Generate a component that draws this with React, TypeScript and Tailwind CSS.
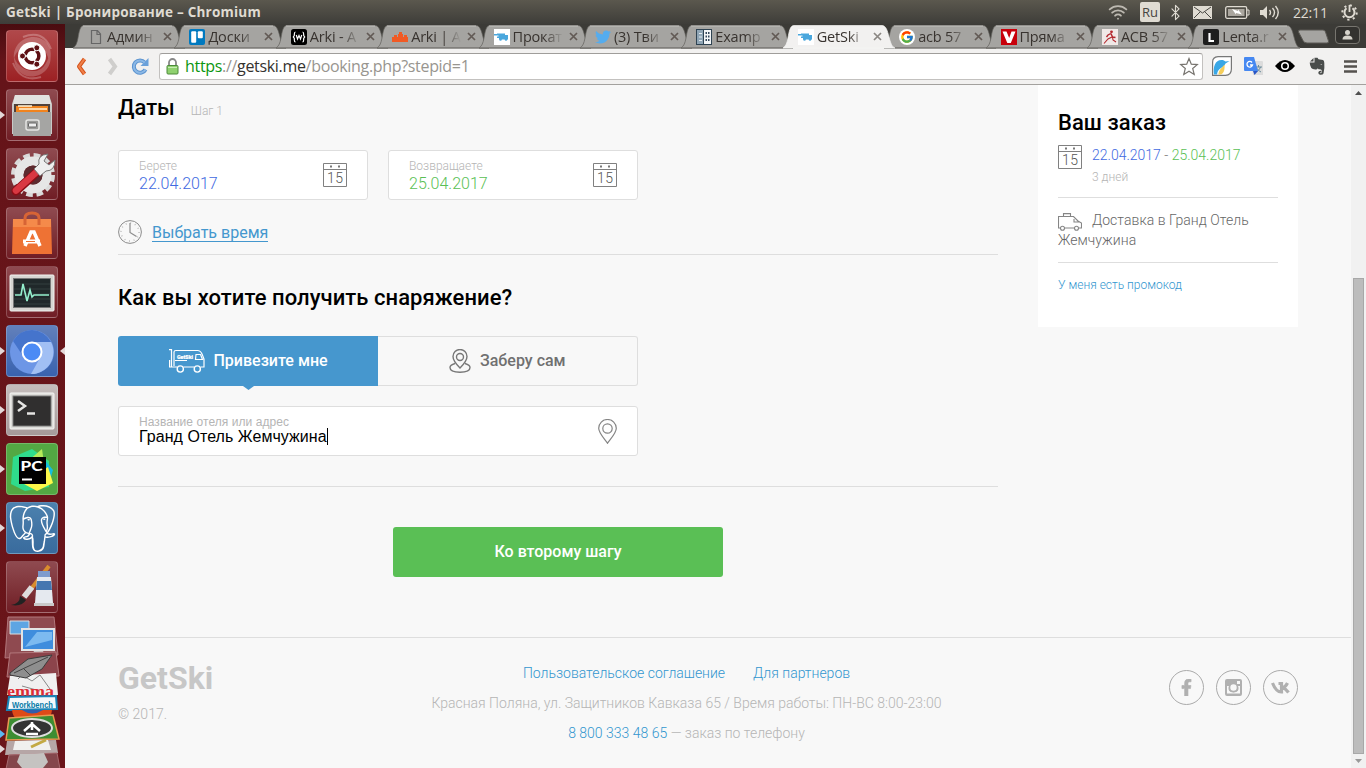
import React from "react";
import { FaFacebookF, FaTwitter, FaVk, FaEvernote, FaTrello, FaUbuntu } from "react-icons/fa";
import { FcGoogle } from "react-icons/fc";
import { SiPostgresql } from "react-icons/si";
import { Wifi, Bluetooth } from "lucide-react";

const ui = "font-['Open_Sans','Noto_Sans',sans-serif]";

function MiniVan() {
  return (
    <span className="flex h-4 w-4 items-center justify-center bg-white">
      <svg width="16" height="16" viewBox="0 0 16 16">
        <path d="M0 5h3V4.500h8V6h3v4.500H5V9H3V7.500h1.500V6.500H0z" fill="#4aa7dd" />
        <circle cx="6.500" cy="10.500" r="1.300" fill="#4aa7dd" />
        <circle cx="12" cy="10.500" r="1.300" fill="#4aa7dd" />
      </svg>
    </span>
  );
}

const favicons: React.ReactNode[] = [
  <svg width="16" height="16" viewBox="0 0 16 16" fill="none" stroke="#666" strokeWidth="1.200">
    <path d="M3.500 1.500h6l3 3.500v9.500h-9zM9 1.500V5.500h3.500" />
  </svg>,
  <svg width="16" height="16" viewBox="0 0 16 16">
    <rect width="16" height="16" rx="2" fill="#0079bf" />
    <rect x="2.200" y="2.200" width="5" height="11.500" rx="1" fill="#fff" />
    <rect x="8.800" y="2.200" width="5" height="7" rx="1" fill="#fff" />
  </svg>,
  <svg width="16" height="16" viewBox="0 0 16 16">
    <rect width="16" height="16" rx="2.500" fill="#000" />
    <path d="M4.500 3C3 3 3.500 4.500 3.300 6.500L2.300 8l1 1.300C3.500 12 3 13 4.500 13M11.500 3c1.500 0 1 1.500 1.200 3.500l1 1.500-1 1.300c-.2 2.700.3 3.700-1.200 3.700M5.300 6l1.200 4L8 6.500 9.500 10l1.200-4" fill="none" stroke="#fff" strokeWidth="1.200" />
  </svg>,
  <svg width="16" height="16" viewBox="0 0 16 16" fill="#f15a24">
    <path d="M0 8h2V6h3v2h1V5h1V3h3v2h1v3h1V6h3v2h1v5H0z" />
  </svg>,
  <MiniVan />,
  <FaTwitter size={16} color="#55acee" />,
  <svg width="16" height="16" viewBox="0 0 16 16">
    <rect x=".5" y=".5" width="15" height="15" fill="#8fa5b5" stroke="#2f4352" />
    <path d="M8 1h7v14H8z" fill="#f3f6f8" />
    <path d="M7.500 1v14" stroke="#2f4352" />
    <path d="M3 4.500h3M3 8h3M3 11.500h3" stroke="#e4ebf0" />
    <path d="M9.500 4h4M9.500 7.500h4M9.500 11h4" stroke="#33475b" strokeWidth="2" strokeDasharray="1.500 1" />
  </svg>,
  <MiniVan />,
  <span className="flex h-4 w-4 items-center justify-center rounded-full bg-white">
    <FcGoogle size={14} />
  </span>,
  <svg width="16" height="16" viewBox="0 0 16 16">
    <rect width="16" height="16" fill="#c8000b" />
    <path d="M1.500 2.500h4l2.700 6.500 2.300-6.500h4L9.800 14H6.300z" fill="#fff" />
  </svg>,
  <svg width="16" height="16" viewBox="0 0 16 16">
    <rect width="16" height="16" fill="#f0e8e6" />
    <circle cx="9.500" cy="2.800" r="1.400" fill="#b3272d" />
    <path d="M8.800 4.500 6 6 4.500 8M9 4.500l1.500 3.500 3 .5" stroke="#b3272d" strokeWidth="1.400" fill="none" />
    <path d="M10 8 6 10l-4 4.500M10.500 8l.5 3 3 2" stroke="#b3272d" strokeWidth="1.100" fill="none" />
  </svg>,
  <svg width="16" height="16" viewBox="0 0 16 16">
    <rect width="16" height="16" rx="2" fill="#1e1e1e" />
    <path d="M6.500 4v8h4.500" fill="none" stroke="#fff" strokeWidth="2.200" />
  </svg>,
];

const tabs = ["Админ", "Доски", "Arki - A", "Arki | A", "Прокат", "(3) Тви", "Examp", "GetSki", "acb 57", "Пряма", "АСВ 57", "Lenta.r"];

function Tab({ title, icon, active }: { title: string; icon: React.ReactNode; active: boolean }) {
  return (
    <div className={`relative flex h-6 w-[101.400px] shrink-0 items-center pl-[15px] pt-px ${active ? "z-10" : ""}`}>
      <svg className="absolute left-0 top-0 overflow-visible" width="112" height="24" viewBox="0 0 112 24">
        <path
          d="M0 24C3 22 4 19 5 14 6 8 7 1.500 11 1.500H99C103 1.500 104.500 7 106 13 107.500 19 109 23 112 24z"
          fill={active ? "#f2f1f0" : "#a5a4a1"}
          stroke={active ? "#f7f6f5" : "#62605b"}
          strokeWidth=".7"
        />
        {!active && <path d="M10 2h89" stroke="#c2c1be" />}
        {!active && <path d="M0 24h112" stroke="#75736f" />}
      </svg>
      <div className="relative flex h-4 w-4 items-center justify-center">{icon}</div>
      <div className="relative ml-[3px] w-[50px] overflow-hidden whitespace-nowrap text-[14.500px] leading-5 tracking-[-0.200px] text-[#38332f] [mask-image:linear-gradient(to_right,black_62%,transparent)]">
        {title}
      </div>
      <svg className="relative ml-[6px]" width="9" height="9" viewBox="0 0 9 9">
        <path d="M1 1l7 7M8 1 1 8" stroke={active ? "#8b8783" : "#625a55"} strokeWidth="1.700" />
      </svg>
    </div>
  );
}

function TitleBar() {
  return (
    <header className="flex h-6 shrink-0 items-center bg-linear-to-b from-[#5b584e] to-[#3e3d39] pl-[6px] text-[#dfdbd2]">
      <div className="text-[13.500px] font-bold leading-6 tracking-[0.230px]">GetSki | Бронирование – Chromium</div>
      <div className="ml-auto flex h-6 items-center pr-[8px]">
        <Wifi size={20} strokeWidth={2.2} className="text-[#bdb9b1]" />
        <span className="ml-[12px] flex h-5 w-5 items-center justify-center rounded-xs bg-[#dfdbd2] text-[13px] leading-5 text-[#45443f]">Ru</span>
        <Bluetooth size={17} strokeWidth={1.600} className="ml-[7px]" />
        <svg className="ml-[9px]" width="19" height="13" viewBox="0 0 19 13">
          <path d="M0 0h19v13H0z" fill="#dfdbd2" />
          <path d="m1 1 8.500 6L18 1M1 12l6-6M18 12l-6-6" stroke="#4a4944" fill="none" />
        </svg>
        <svg className="ml-[13px]" width="25" height="13" viewBox="0 0 25 13">
          <rect x=".7" y=".7" width="21" height="11.600" rx="1.500" fill="none" stroke="#dfdbd2" strokeWidth="1.300" />
          <path d="M22 4h2v5h-2" fill="none" stroke="#dfdbd2" />
          <path d="M3 3h16.500v7H3z" fill="#aaa69e" />
          <path d="m7 3 6 2V3.500l4 5-6-1.500v1.500z" fill="#fff" />
        </svg>
        <svg className="ml-[10px]" width="21" height="17" viewBox="0 0 21 17" fill="none" stroke="#dfdbd2" strokeWidth="1.400">
          <path d="M0 6h3l4-4v13l-4-4H0z" fill="#dfdbd2" stroke="none" />
          <path d="M9.500 6q2 2.500 0 5M12.500 4q4 4.500 0 9M15.500 2q5.500 6.500 0 13" />
        </svg>
        <span className="ml-[12px] w-[36px] whitespace-nowrap text-[14px] tracking-[-0.200px]">22:11</span>
        <svg className="ml-[12px]" width="17" height="17" viewBox="0 0 17 17" fill="none" stroke="#dfdbd2">
          <path d="M5.500 4.300a5 5 0 1 0 6 0" strokeWidth="2" />
          <path d="M8.500 1v7" strokeWidth="1.800" />
          <circle cx="8.500" cy="8.500" r="7.200" strokeWidth="2" strokeDasharray="2.200 3.450" />
        </svg>
      </div>
    </header>
  );
}

function TabStrip() {
  return (
    <div className="flex h-6 shrink-0 bg-[#3c3b37] pl-[8px]">
      {tabs.map((t, i) => (
        <Tab key={i} title={t} icon={favicons[i]} active={i === 7} />
      ))}
      <svg className="ml-[7px] mt-[4px] shrink-0" width="33" height="17" viewBox="0 0 33 17">
        <path d="M3 2h23q2 0 2.500 2l3 9q.5 2-1.500 2H10q-3 0-4-2.500L1.500 4Q1 2 3 2z" fill="#a5a4a1" stroke="#5b5954" />
      </svg>
      <div className="ml-[5px] mt-[2px] flex h-[18px] w-[25px] items-center justify-center rounded-sm border border-[#77756f] bg-[#33322f]">
        <svg width="11" height="10" viewBox="0 0 11 10" fill="#d6d3cb">
          <circle cx="5.500" cy="2.500" r="2.500" />
          <path d="M.5 9.500q0-4 5-4t5 4z" />
        </svg>
      </div>
    </div>
  );
}

function Toolbar() {
  return (
    <div className="flex h-[37px] shrink-0 items-center border-b border-[#a3a19e] bg-[#f2f1f0] pl-[11px]">
      <svg width="11" height="19" viewBox="0 0 11 19">
        <path d="M8.500 2 3 9.500l5.500 7.500" fill="none" stroke="#d4531b" strokeWidth="4" strokeLinejoin="round" />
        <path d="M8.500 2 3 9.500l5.500 7.500" fill="none" stroke="#f0804a" strokeWidth="2" />
      </svg>
      <svg className="ml-[20px]" width="11" height="19" viewBox="0 0 11 19">
        <path d="M2.500 2 8 9.500 2.500 17" fill="none" stroke="#cfcecc" strokeWidth="4" />
      </svg>
      <svg className="ml-[13px]" width="18" height="19" viewBox="0 0 18 19">
        <path d="M14.500 12.500a6.200 6.200 0 1 1-.8-7" fill="none" stroke="#5b93cf" strokeWidth="4" />
        <path d="M17.500 1v8H9.500z" fill="#6ba1da" />
        <path d="M14.500 12.500a6.200 6.200 0 1 1-.8-7" fill="none" stroke="#8db9e6" strokeWidth="2" />
      </svg>
      <div className="ml-[10px] flex h-[27px] w-[1044px] shrink-0 items-center rounded-[3px] border border-[#c3c1bf] border-t-[#9f9d9a] bg-white pl-[6px]">
        <svg width="13" height="17" viewBox="0 0 13 17">
          <path d="M3 8V4.500a3.500 3.500 0 0 1 7 0V8" fill="none" stroke="#888" strokeWidth="1.800" />
          <rect x="1" y="7.500" width="11" height="8.500" rx="1" fill="#8fd16f" stroke="#4c8a3a" />
          <path d="M2 9.500h9" stroke="#c5edb2" />
        </svg>
        <div className="ml-[6px] text-[16px] leading-5 tracking-[-0.320px] text-[#98958f]">
          <span className="text-[#0b9610]">https</span>://<span className="text-[#35322e]">getski.me</span>/booking.php?stepid=1
        </div>
        <svg className="ml-auto mr-[3px]" width="20" height="19" viewBox="0 0 20 19">
          <path d="m10 1.500 2.300 5.700 6 .4-4.600 3.900 1.500 5.900L10 14.200l-5.200 3.200 1.500-5.900L1.700 7.600l6-.4z" fill="#fff" stroke="#77746f" strokeWidth="1.200" />
        </svg>
      </div>
      <svg className="ml-[9px] shrink-0" width="20" height="20" viewBox="0 0 20 20">
        <path d="M6 .6h13.400V13q0 6-6 6.400H.6V6q0-5 5.400-5.400z" fill="#fff" stroke="#777" strokeWidth="1.200" />
        <path d="M2 18.500C1 11 3 4 9.500 4c2 0 3 .6 4 1.600l4-.6-4 2.500C12 12 6 11 5 18.500z" fill="#39a7e6" />
        <path d="M6.500 18.500c0-5 4-7 6-10 .5 4-.5 9-3.500 10z" fill="#f6ce5a" />
      </svg>
      <svg className="ml-[12px] shrink-0" width="19" height="19" viewBox="0 0 19 19">
        <path d="M7 4h11q1 0 1 1v13H9z" fill="#dcdcdc" />
        <path d="M11 10h7M14.500 8v2M16.500 10c-1 3-3 4-5 5M12.500 11c1 2 3 3 4.500 4" stroke="#6b8c9b" fill="none" />
        <path d="M1 0h9l4 14H1q-1 0-1-1V1q0-1 1-1z" fill="#4688f1" />
        <path d="m9 14 5 0-3.500 4z" fill="#2a56c6" />
        <path d="M8 5.500A2.800 2.800 0 1 0 8.500 8H6" stroke="#fff" strokeWidth="1.300" fill="none" />
      </svg>
      <svg className="ml-[12px] shrink-0" width="20" height="12" viewBox="0 0 20 12">
        <path d="M0 6q10-12 20 0-10 12-20 0z" fill="#000" />
        <circle cx="10" cy="6" r="4" fill="#fff" />
        <circle cx="10" cy="6" r="2.500" fill="#000" />
      </svg>
      <svg className="ml-[14px] shrink-0" width="16" height="18" viewBox="0 0 16 18">
        <path d="M4.500 1v3.500H1zM5.500.8h3l1 1.500 4.500.6q1.200.4 1.300 3 .5 5-.8 10.500-.6 1.600-3.500 1.300-1.800-.3-1.700-2.200.1-2 3-1.800v1.600q-1.300-.2-1.300.5.400.7 1.300.3.700-.4.5-2.600-.4-1.500-3.300-1.200l-.7-1q-.6 1.400-2.500 1.200-3-.2-4-1.500Q.8 8.500.7 5.500h4.800z" fill="#4a4d4b" />
        <path d="M11.200 7.500q1.300-1.200 2 .3z" fill="#f2f1f0" />
      </svg>
      <svg className="ml-[19px] shrink-0" width="13" height="13" viewBox="0 0 13 13">
        <path d="M0 1.500h13M0 6.500h13M0 11.500h13" stroke="#55524e" strokeWidth="2.600" />
      </svg>
    </div>
  );
}

function Tile({ bg, left, right, children }: { bg: string; left?: boolean; right?: boolean; children: React.ReactNode }) {
  return (
    <div className="relative flex h-[52px] w-full shrink-0 justify-center">
      {left && (
        <svg className="absolute left-0 top-[22px]" width="5" height="8" viewBox="0 0 5 8"><path d="M0 0l5 4-5 4z" fill="#e3d8d8" /></svg>
      )}
      <div className={`mr-[1px] flex h-[52px] w-[52px] items-center justify-center overflow-hidden rounded-[4px] border border-white/20 ${bg}`}>{children}</div>
      {right && (
        <svg className="absolute right-0 top-[22px]" width="5" height="8" viewBox="0 0 5 8"><path d="M5 0 0 4l5 4z" fill="#e3d8d8" /></svg>
      )}
    </div>
  );
}

function Launcher() {
  const wine = "bg-linear-to-b from-[#8f4a50] to-[#701d25]";
  return (
    <nav className="flex h-[744px] w-[65px] shrink-0 flex-col gap-[7px] overflow-hidden bg-linear-to-b from-[#4a0c10] via-[#651419] via-5% to-[#6b151a] pt-[6px]">
      <Tile bg="relative bg-linear-to-b from-[#b0484a] to-[#9c2023]">
        <svg width="50" height="50" viewBox="0 0 50 50" fill="none" className="shrink-0">
          <path d="M7 28C5 10 25 0 38 10c8 7 6 18 4 24 0-12-6-20-17-20S8 22 7 28zM43 22c4 16-12 28-26 22-8-4-10-12-10-18 4 10 12 14 20 14s13-7 16-18z" fill="#fff" opacity=".22" />
          <path d="M16 6Q36-2 44 18M34 46Q14 52 6 32" stroke="#fff" opacity=".25" strokeWidth="2" />
          <circle cx="25" cy="25" r="14" fill="#fff" />
          <circle cx="25" cy="25" r="6.800" stroke="#5e1014" strokeWidth="3.600" />
          <path d="M25 25H13M25 25l6-10.400M25 25l6 10.400" stroke="#fff" strokeWidth="1.500" />
          <circle cx="25" cy="25" r="4.800" fill="#fff" />
          <circle cx="15.500" cy="25" r="3" fill="#5e1014" stroke="#fff" />
          <circle cx="29.800" cy="16.800" r="3" fill="#5e1014" stroke="#fff" />
          <circle cx="29.800" cy="33.200" r="3" fill="#5e1014" stroke="#fff" />
        </svg>
      </Tile>
      <Tile left bg={wine}>
        <svg width="46" height="46" viewBox="0 0 46 46">
          <path d="M6 3h34l3 9v30H3V12z" fill="#c9c9c7" />
          <path d="M6 3h34l2 9H4z" fill="#e2e2e0" />
          <path d="M5 12h36v8H5z" fill="#50413a" />
          <path d="M7 14h32v6H7z" fill="#f0831e" />
          <path d="M10 17h28M9 14h14" stroke="#fff4d8" strokeWidth="1.500" />
          <path d="M4 20h38v24H4z" fill="#a5a5a3" />
          <rect x="17" y="28" width="13" height="10" rx="2" fill="#9a9a98" stroke="#e5e5e3" strokeWidth="1.500" />
          <rect x="19.500" y="31" width="8" height="4" rx="1" fill="#eee" stroke="#666" />
        </svg>
      </Tile>
      <Tile bg={wine}>
        <svg width="48" height="48" viewBox="0 0 48 48" className="shrink-0">
          <circle cx="25" cy="25" r="19.500" fill="none" stroke="#dadada" strokeWidth="5" strokeDasharray="6.500 3.710" />
          <circle cx="25" cy="25" r="14" fill="none" stroke="#e6e6e6" strokeWidth="9" />
          <circle cx="25" cy="25" r="9.500" fill="#5c2a2f" />
          <path d="m8 41 21-19" stroke="#8e0d15" strokeWidth="9" strokeLinecap="round" />
          <path d="m8 40.500 20-18" stroke="#d93842" strokeWidth="6.500" strokeLinecap="round" />
          <path d="m26 19 6 7 6-5q9 0 9-11l-6 5-5-4 4-7q-11 1-9 10z" fill="#efefef" stroke="#777" />
        </svg>
      </Tile>
      <Tile bg={wine}>
        <svg width="46" height="46" viewBox="0 0 46 46">
          <path d="M4 9h38l1 35H3z" fill="#ee7234" />
          <path d="M4 9h38v8H4z" fill="#f58a4a" />
          <path d="M16 15V8q0-5 7-5t7 5v7" stroke="#d76435" strokeWidth="3" fill="none" />
          <path d="m16 36 6-14h3l6 14" stroke="#fff" strokeWidth="3.500" fill="none" />
          <path d="M14 31.500h17" stroke="#fff" strokeWidth="4" />
          <path d="M17 31.500h9" stroke="#ee7234" strokeWidth="1" />
        </svg>
      </Tile>
      <Tile bg={wine}>
        <svg width="48" height="48" viewBox="0 0 48 48">
          <rect x="2" y="7" width="44" height="36" rx="1" fill="#d6d5d1" stroke="#f3f3f1" />
          <rect x="5.500" y="10.500" width="37" height="29" fill="#20282a" stroke="#777" />
          <path d="M6 16h36M6 21h36M6 26h36M6 31h36M6 36h36" stroke="#323f3f" />
          <path d="M7 27h6l2-11 4 17 3-11 2 7 2-2h15" fill="none" stroke="#94efcd" strokeWidth="1.600" />
        </svg>
      </Tile>
      <Tile left right bg="bg-linear-to-b from-[#6280bb] to-[#3962ae]">
        <svg width="46" height="46" viewBox="0 0 46 46">
          <circle cx="23" cy="24" r="22" fill="#6d96e6" />
          <path d="M23 2a22 22 0 0 1 19 12H23A10 10 0 0 0 14 28L4 13Q11 2 23 2z" fill="#4574cc" />
          <path d="M42 14a22 22 0 0 1-20 32l10-18q2-7-6-14z" fill="#a1bff4" />
          <circle cx="23" cy="24" r="9.500" fill="#4c8bf5" stroke="#fff" strokeWidth="2" />
        </svg>
      </Tile>
      <Tile left bg="bg-linear-to-b from-[#c5bdbc] to-[#a59999]">
        <svg width="48" height="48" viewBox="0 0 48 48">
          <rect x="2" y="7" width="44" height="36" rx="1" fill="#dddcd9" stroke="#f7f7f5" />
          <rect x="5" y="10" width="38" height="30" fill="#302f2f" stroke="#777" />
          <path d="m10 15 7 5-7 5M19 27.500h8" fill="none" stroke="#e5e5e3" strokeWidth="2.500" />
        </svg>
      </Tile>
      <Tile left bg="bg-[#53a843]">
        <svg width="48" height="48" viewBox="0 0 48 48">
          <path d="M5 12 24 4l17 12v26l-24 4-14-7z" fill="#2fdc8c" />
          <path d="m34 4 2 14-12 16-4-18z" fill="#b6e95a" />
          <path d="m36 14 9 11-4 14H26z" fill="#16bde0" />
          <path d="m40 22 5 16-16 8-13-7z" fill="#fcf84a" />
          <rect x="11" y="12" width="27" height="27" fill="#000" />
          <path d="M14 34.500h10" stroke="#fff" strokeWidth="2" />
          <text x="12.500" y="25.500" fontFamily="Lato, sans-serif" fontWeight="900" fontSize="14" textLength="22" lengthAdjust="spacingAndGlyphs" fill="#fff">PC</text>
        </svg>
      </Tile>
      <Tile left bg="bg-linear-to-b from-[#4c81ae] to-[#396b9d]">
        <SiPostgresql size={47} color="#fff" />
      </Tile>
      <Tile bg={wine}>
        <svg width="48" height="48" viewBox="0 0 48 48">
          <path d="M41 3 23 26" stroke="#d98c2d" strokeWidth="4" />
          <path d="m24 24-8 10" stroke="#ddd" strokeWidth="6" />
          <path d="M3 42q9-1 9-9l6 4q-4 7-15 5z" fill="#222" />
          <path d="M30 8h12v6H30z" fill="#7e9bcc" />
          <path d="M29 14h14l2 26H27z" fill="#e5e9ef" />
          <path d="M29 18h14l1 9H28z" fill="#4576b0" />
          <path d="M26 40h20v3H26z" fill="#c9c9c9" />
        </svg>
      </Tile>
      <svg className="-mt-[4px] shrink-0" width="65" height="152" viewBox="0 0 65 152">
        <path d="M8 1h46l4 38-53 3z" fill="#8f4a50" stroke="#b3787c" />
        <path d="M10 5h19v13H10z" fill="#5da5e3" stroke="#ddd" />
        <path d="M22 13h32v21H22z" fill="#3f8ddd" stroke="#e4e4e4" strokeWidth="2" />
        <path d="m25 31 12-15h15v8z" fill="#7cbaf0" />
        <path d="M34 35h9l2 4H32z" fill="#ccc" />
        <path d="m10 37 46-1 3 24-52 1z" fill="#8c444b" stroke="#b3787c" />
        <path d="m10 60 46-3 2 22H7z" fill="#f0f0f0" />
        <path d="m18 63 4-4 10 6 8-6 10 14M22 70l18 5" stroke="#888" fill="none" />
        <path d="m10 57 18-14 24-4-10 14-16 9-16-3z" fill="#8e8e8e" stroke="#3c3c3c" />
        <path d="m14 57 34-16M24 53l6 6" stroke="#444" />
        <text x="7" y="80" fontFamily="Liberation Serif, serif" fontWeight="700" fontSize="15" textLength="47" lengthAdjust="spacingAndGlyphs" fill="#dd2c35">emma</text>
        <path d="m9 81 47-1 1 13-50 1z" fill="#f4f8fa" stroke="#1884b8" strokeWidth="2" />
        <text x="12" y="92" fontFamily="Liberation Sans, sans-serif" fontWeight="700" fontSize="8.500" textLength="41" lengthAdjust="spacingAndGlyphs" fill="#087ba8">Workbench</text>
        <path d="M12 94h40q-1 13-20 13T12 94z" fill="#df4a18" />
        <path d="M22 94q10 7 21 0z" fill="#315dac" />
        <path d="m9 102 44-3 6 24-53 1z" fill="#3d8d32" stroke="#e99a52" strokeWidth="1.500" />
        <ellipse cx="32" cy="112" rx="20" ry="9" fill="#333" stroke="#ddd" strokeWidth="2" />
        <path d="m24 115 8-7 8 7M26 118h12M32 106v8" stroke="#fff" strokeWidth="2.500" fill="none" />
        <path d="m7 125 49-1 2 13-53 2z" fill="#b6a6a6" />
        <path d="m15 125 33-1 3 10H13z" fill="#f0f0ef" />
        <path d="M31 131 46 124" stroke="#c3a944" strokeWidth="3" />
        <path d="m9 139 48-2 3 16H6z" fill="#84474c" stroke="#a76b70" />
        <path d="m20 138 24-1 4 9-5 6H22l-5-6z" fill="#c5c3c1" />
        <path d="m0 114 5 4-5 4z" fill="#5cb8ef" />
        <path d="m0 129 5 4-5 4z" fill="#e3d8d8" />
      </svg>
    </nav>
  );
}

function Calendar() {
  return (
    <svg width="24" height="25" viewBox="0 0 24 25" className="shrink-0">
      <path d="M.5.500h23v23H.5zM.5 6.500h23" fill="none" stroke="#808080" />
      <path d="M7 2.500h2v2H7zM15 2.500h2v2h-2z" fill="#777" />
      <text x="12.200" y="20" textAnchor="middle" fontFamily="Roboto, sans-serif" fontSize="14" fontWeight="300" letterSpacing=".5" fill="#555">15</text>
    </svg>
  );
}

function DateField({ label, value, color }: { label: string; value: string; color: string }) {
  return (
    <div className="flex h-[50px] w-[250px] items-center justify-between rounded-[3px] border border-[#dedede] bg-white px-5">
      <div className="pt-[2px]">
        <div className="text-[12px] leading-[14px] text-[#b5b5b5]">{label}</div>
        <div className={`text-[16px] leading-[21px] ${color}`}>{value}</div>
      </div>
      <Calendar />
    </div>
  );
}

function Booking() {
  return (
    <main className="w-[880px]">
      <div className="flex items-baseline pt-[10px]">
        <h2 className="text-[22px] font-medium leading-[26px] text-black">Даты</h2>
        <span className="ml-[16px] text-[12px] text-[#b5b5b5]">Шаг 1</span>
      </div>
      <div className="mt-[29px] flex gap-5">
        <DateField label="Берете" value="22.04.2017" color="text-[#4169e1]" />
        <DateField label="Возвращаете" value="25.04.2017" color="text-[#5abf55]" />
      </div>
      <div className="flex h-[55px] items-center gap-[10px] border-b border-[#dedede] pt-[9px]">
        <svg width="24" height="24" viewBox="0 0 24 24" fill="none" stroke="#8c8c8c">
          <circle cx="12" cy="12" r="11.400" />
          <circle cx="12" cy="12" r="9" stroke="#b5b5b5" strokeDasharray=".9 3.812" strokeWidth="1.500" />
          <path d="M12 3v9.500l6.500 4" strokeWidth="1.200" />
        </svg>
        <a className="mt-[2px] border-b border-[#4497ce] text-[16px] font-normal leading-[17px] text-[#4497ce]">Выбрать время</a>
      </div>
      <h2 className="pt-[30px] text-[22px] font-medium leading-[26px] tracking-[0.060px] text-black">Как вы хотите получить снаряжение?</h2>
      <div className="mt-[25px] flex w-[520px] text-[16px] font-medium">
        <div className="relative flex h-[50px] w-[260px] items-center rounded-l-[3px] bg-[#4697ce] pl-[51px] text-white">
          <svg width="36" height="24" viewBox="0 0 36 24" fill="none" stroke="#fff">
            <path d="M0 .6h2.500v17.400M.6 11v7H8M5 17V3q0-1.500 2-1.500h21.500q3 0 4.500 3.500l2 5v8h-3.500M25 18H14.500M27 5.500h4.500l2 5h-7zM6 11.500h12" strokeWidth="1.200" />
            <circle cx="11.300" cy="20" r="3.100" strokeWidth="1.400" />
            <circle cx="28.300" cy="20" r="3.100" strokeWidth="1.400" />
            <text x="8" y="9.500" fill="#fff" stroke="#fff" strokeWidth=".2" fontSize="5.500" fontFamily="Roboto, sans-serif" fontWeight="900" textLength="16" lengthAdjust="spacingAndGlyphs">GetSki</text>
          </svg>
          <span className="ml-[8.500px]">Привезите мне</span>
          <svg className="absolute left-[125px] top-[50px]" width="11" height="4" viewBox="0 0 11 4">
            <path d="M0 0h11L5.500 4z" fill="#4697ce" />
          </svg>
        </div>
        <div className="flex h-[50px] w-[260px] items-center rounded-r-[3px] border border-l-0 border-[#dedede] pl-[71px] text-[#707070]">
          <svg width="22" height="24" viewBox="0 0 22 24" fill="none" stroke="#777" strokeWidth="1.400">
            <path d="M11 19Q4 12 4 7.500a7 7 0 0 1 14 0Q18 12 11 19z" />
            <circle cx="11" cy="8" r="3.500" />
            <path d="M6 14.500C2.500 15.500 1 17 1 18.500 1 21.500 5 23.200 11 23.200s10-1.700 10-4.700c0-1.500-1.500-3-5-4" />
          </svg>
          <span className="ml-[9px]">Заберу сам</span>
        </div>
      </div>
      <div className="mt-5 flex h-[50px] w-[520px] items-center justify-between rounded-[3px] border border-[#dedede] bg-white px-5 font-['Liberation_Sans',sans-serif] font-normal">
        <div className="pb-[3px]">
          <div className="text-[12px] leading-[14px] tracking-[0.060px] text-[#b5b5b5]">Название отеля или адрес</div>
          <div className="flex h-[16px] items-center text-[16px] leading-[16px] tracking-[0.050px] text-black">
            Гранд Отель Жемчужина<span className="h-[17px] w-px bg-black" />
          </div>
        </div>
        <svg width="19" height="25" viewBox="0 0 19 25" fill="none" stroke="#858585" strokeWidth="1.200">
          <path d="M9.500 24.300C8 21.500.7 14.500.7 9.300a8.800 8.800 0 0 1 17.600 0c0 5.200-7.300 12.200-8.800 15z" />
          <circle cx="9.500" cy="9.500" r="4.700" />
        </svg>
      </div>
      <div className="mt-[30px] flex justify-center border-t border-[#dedede] pt-[40px]">
        <button className="h-[50px] w-[330px] rounded-[3px] bg-[#5abf55] text-[16px] font-medium text-white">Ко второму шагу</button>
      </div>
    </main>
  );
}

function Order() {
  return (
    <aside className="ml-10 h-[242px] w-[260px] bg-white px-5 pt-[25px] text-[14px]">
      <h2 className="text-[22px] font-medium leading-[26px] tracking-[0.060px] text-black">Ваш заказ</h2>
      <div className="mt-[9px] flex h-[53px] border-b border-[#dedede]">
        <Calendar />
        <div className="ml-[10px] text-[#777]">
          <div className="leading-5"><span className="text-[#4169e1]">22.04.2017</span> - <span className="text-[#5abf55]">25.04.2017</span></div>
          <div className="mt-[3px] text-[12px] leading-[18px] text-[#b5b5b5]">3 дней</div>
        </div>
      </div>
      <div className="h-[65px] border-b border-[#dedede] pt-[12px] leading-5 tracking-[0.050px] text-[#666]">
        <svg className="-mb-1 mr-[10px] inline align-[-2px]" width="24" height="18" viewBox="0 0 24 18" fill="none" stroke="#858585" strokeWidth="1.100">
          <path d="M2 15H.5V3.500h15L20 8l3.500 2v5H21M16 15H6.500M5.500 3V.6h7V3M16 6v3h5" />
          <circle cx="4.500" cy="15.200" r="2" />
          <circle cx="18.500" cy="15.200" r="2" />
        </svg>
        Доставка в Гранд Отель Жемчужина
      </div>
      <a className="mt-[13px] block text-[12px] leading-[18px] text-[#3296cf]">У меня есть промокод</a>
    </aside>
  );
}

function Footer() {
  const ring = "flex h-[35px] w-[35px] items-center justify-center rounded-full border border-[#aaa] text-[#b0b0b0]";
  return (
    <footer className="mt-auto flex h-[131px] border-t border-[#dedede] px-[53px] text-[14px] text-[#b5b5b5]">
      <div className="w-[313px] pt-[22px]">
        <div className="text-[32px] font-bold leading-9 text-[#c7c7c7]">GetSki</div>
        <div className="mt-[8px] leading-5">© 2017.</div>
      </div>
      <div className="w-[511px] whitespace-nowrap pt-[20px] text-center leading-[30px]">
        <div className="flex justify-center gap-[28px] text-[#3296cf]"><a>Пользовательское соглашение</a><a>Для партнеров</a></div>
        <div>Красная Поляна, ул. Защитников Кавказа 65 / Время работы: ПН-ВС 8:00-23:00</div>
        <div><span className="text-[#3296cf]">8 800 333 48 65</span> — заказ по телефону</div>
      </div>
      <div className="ml-auto flex gap-[12px] pt-[32px]">
        <span className={ring}><FaFacebookF size={17} stroke="currentColor" strokeWidth={20} /></span>
        <span className={ring}>
          <svg width="17" height="17" viewBox="0 0 17 17">
            <path fillRule="evenodd" d="M2 0h13q2 0 2 2v13q0 2-2 2H2q-2 0-2-2V2q0-2 2-2zM2 7v7.500h13V7h-2q2 6-4.500 6.500Q2 13 4 7zM12 2v3h3V2z" fill="currentColor" />
            <circle cx="8.500" cy="8.500" r="4" fill="#f8f8f8" stroke="currentColor" strokeWidth="1.600" />
          </svg>
        </span>
        <span className={ring}>
          <svg width="19" height="12" viewBox="0 0 19 12" fill="none" stroke="currentColor" strokeWidth="3.200">
            <path d="M1.500 1C3.500 6 6 10.200 10.500 10V1.500H7.500M11.500 6Q14.500 5 16.500 1M11.500 5.500Q14.500 6.500 17.500 10.500" />
          </svg>
        </span>
      </div>
    </footer>
  );
}

export default function App() {
  return (
    <div className={`flex h-[768px] w-[1366px] flex-col overflow-hidden ${ui}`}>
      <TitleBar />
      <div className="flex min-h-0 flex-1">
        <Launcher />
        <div className="flex w-[1301px] flex-col">
          <TabStrip />
          <Toolbar />
          <div className="flex min-h-0 flex-1 bg-[#f8f8f8]">
            <div className="flex w-[1286px] flex-col font-['Roboto',sans-serif] font-light">
              <div className="flex items-start pl-[53px]">
                <Booking />
                <Order />
              </div>
              <Footer />
            </div>
            <div className="flex w-[15px] flex-col items-center bg-[#f1f1f1]">
              <svg className="mt-[6px]" width="7" height="4" viewBox="0 0 7 4"><path d="M0 4 3.500 0 7 4z" fill="#505050" /></svg>
              <div className="mt-[183px] h-[476px] w-[11px] border border-[#a8a8a8] bg-[#bcbcbc]" />
              <svg className="mt-[5px]" width="7" height="4" viewBox="0 0 7 4"><path d="m0 0 3.500 4L7 0z" fill="#999" /></svg>
            </div>
          </div>
        </div>
      </div>
    </div>
  );
}
